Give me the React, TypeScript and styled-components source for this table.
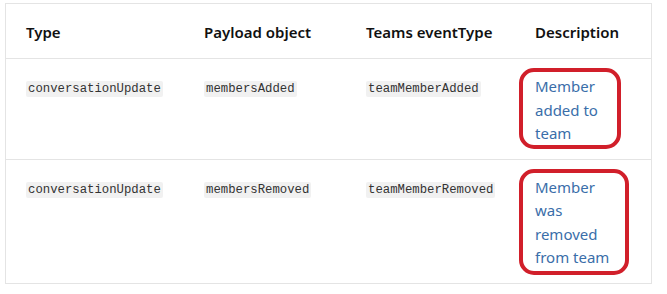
import { Fragment } from 'react';
import styled, { createGlobalStyle } from 'styled-components';

const GlobalStyle = createGlobalStyle`
  body {
    margin: 0;
    background: #ffffff;
    font-family: "Noto Sans", "Open Sans", Arial, sans-serif;
  }
`;

const Table = styled.div`
  box-sizing: border-box;
  width: 647px;
  margin: 3px 0 0 5px;
  border: 1px solid #e4e4e4;
  border-bottom: none;
  display: grid;
  grid-template-columns: 178px 162px 169px 1fr;
`;

const HeadCell = styled.div`
  padding: 16px 20px 14px;
  font-size: 15px;
  line-height: 24px;
  font-weight: 600;
  color: #111111;
  border-bottom: 1px solid #e4e4e4;
  white-space: nowrap;
`;

const Cell = styled.div`
  padding: 16px 20px 13px;
  font-size: 15px;
  line-height: 23.5px;
  border-bottom: 1px solid #e4e4e4;
`;

const Code = styled.code`
  font-family: "Liberation Mono", "DejaVu Sans Mono", monospace;
  font-size: 12.3px;
  color: #333333;
  background: #f1f1f1;
  padding: 1px 2px;
  border-radius: 2px;
`;

const Description = styled.span<{ $right: number; $bottom: number }>`
  position: relative;
  display: block;
  width: 80px;
  color: #3a6ea9;

  &::after {
    content: '';
    position: absolute;
    left: -16px;
    top: -7px;
    right: ${(p) => p.$right}px;
    bottom: ${(p) => p.$bottom}px;
    border: 4px solid #d11f2a;
    border-radius: 15px;
    pointer-events: none;
  }
`;

const rows = [
  {
    type: 'conversationUpdate',
    payload: 'membersAdded',
    eventType: 'teamMemberAdded',
    description: 'Member added to team',
    right: -6,
    bottom: -3,
  },
  {
    type: 'conversationUpdate',
    payload: 'membersRemoved',
    eventType: 'teamMemberRemoved',
    description: 'Member was removed from team',
    right: -14,
    bottom: -5,
  },
];

export default function App() {
  return (
    <>
      <GlobalStyle />
      <Table>
        <HeadCell>Type</HeadCell>
        <HeadCell>Payload object</HeadCell>
        <HeadCell>Teams eventType</HeadCell>
        <HeadCell>Description</HeadCell>
        {rows.map((row) => (
          <Fragment key={row.eventType}>
            <Cell>
              <Code>{row.type}</Code>
            </Cell>
            <Cell>
              <Code>{row.payload}</Code>
            </Cell>
            <Cell>
              <Code>{row.eventType}</Code>
            </Cell>
            <Cell>
              <Description $right={row.right} $bottom={row.bottom}>
                {row.description}
              </Description>
            </Cell>
          </Fragment>
        ))}
      </Table>
    </>
  );
}
